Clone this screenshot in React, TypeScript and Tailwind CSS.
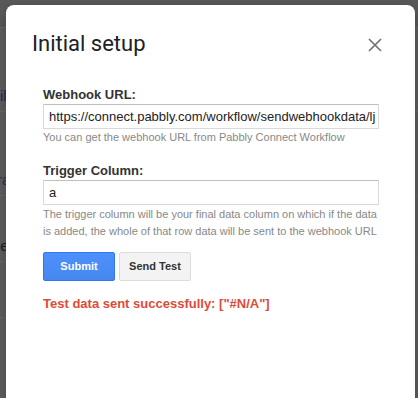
export default function App() {
  return (
    <div className="relative w-[418px] h-[398px] overflow-hidden bg-[#5f605f]" style={{ fontFamily: "Arial, 'Liberation Sans', sans-serif" }}>
      {/* spreadsheet behind the overlay */}
      <div className="absolute inset-0">
        <div className="h-[28px] border-b border-[#6a6a6a] bg-[#5b5b5b]" />
        <div className="h-[84px] border-b border-[#6c6c6c] flex items-end pb-[4px] text-[15px] text-[#1d2a48]">il</div>
        <div className="h-[84px] border-b border-[#6c6c6c] flex items-end pb-[4px] text-[15px] text-[#2b3852] -ml-[3px]">ra</div>
        <div className="h-[66px] border-b border-[#6c6c6c] flex items-end pb-[4px] text-[15px] text-[#202020] -ml-[3px]">le</div>
        <div className="h-[56px] border-b border-[#6c6c6c]" />
      </div>

      <div className="absolute left-[6px] top-[5px] w-[409px] h-[400px] bg-white rounded-[8px] shadow-[0_4px_16px_rgba(0,0,0,0.3)]">
        <div className="flex items-center justify-between pl-[26px] pr-[33px] pt-[24px]">
          <h1 className="text-[22px] leading-[30px] text-[#202124]" style={{ fontFamily: "Roboto, sans-serif" }}>
            Initial setup
          </h1>
          <svg width="14" height="14" viewBox="0 0 14 14" className="mt-[2px]">
            <path d="M1 1L13 13M13 1L1 13" stroke="#6f6f6f" strokeWidth="1.6" />
          </svg>
        </div>

        <div className="pl-[37px] pr-[36px] pt-[28px]">
          <label className="block text-[13px] font-bold text-[#333] leading-[15px]">Webhook URL:</label>
          <div className="mt-[2px] h-[25px] border border-[#d9d9d9] border-t-[#c0c0c0] px-[5px] flex items-center overflow-hidden whitespace-nowrap text-[13px] text-[#222]">
            https://connect.pabbly.com/workflow/sendwebhookdata/lj
          </div>
          <p className="mt-[2px] text-[11px] leading-[13px] text-[#888]">You can get the webhook URL from Pabbly Connect Workflow</p>

          <label className="block mt-[19px] text-[13px] font-bold text-[#333] leading-[15px]">Trigger Column:</label>
          <div className="mt-[2px] h-[25px] border border-[#d9d9d9] border-t-[#c0c0c0] px-[5px] flex items-center text-[13px] text-[#222]">
            a
          </div>
          <p className="mt-[1px] text-[11px] leading-[17px] text-[#888]">
            The trigger column will be your final data column on which if the data is added, the whole of that row data will be sent to the webhook URL
          </p>

          <div className="mt-[12px] flex gap-[4px]">
            <button className="w-[72px] h-[29px] rounded-[2px] border border-[#3079ed] bg-gradient-to-b from-[#4d90fe] to-[#4787ed] text-white text-[11px] font-bold">
              Submit
            </button>
            <button className="w-[72px] h-[29px] rounded-[2px] border border-[#dcdcdc] bg-[#f3f3f3] text-[#333] text-[11px] font-bold">
              Send Test
            </button>
          </div>

          <p className="mt-[15px] text-[13px] leading-[16px] font-bold text-[#dd4b39]">Test data sent successfully: ["#N/A"]</p>
        </div>
      </div>
    </div>
  );
}
